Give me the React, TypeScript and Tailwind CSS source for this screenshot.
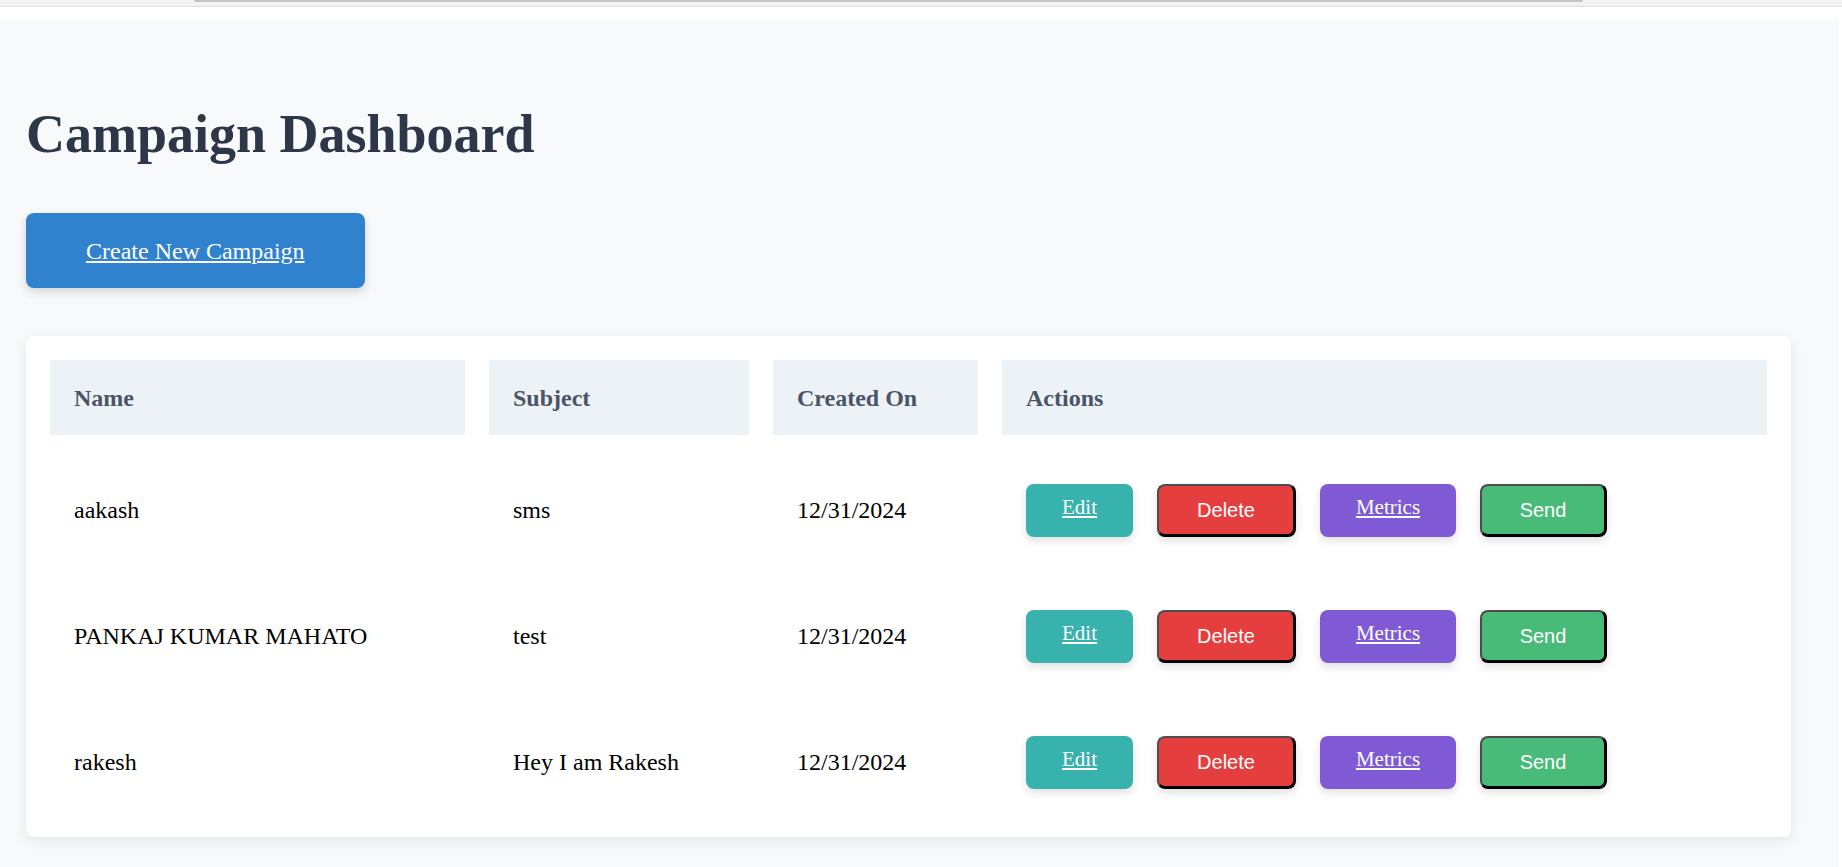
import React from "react";

type Campaign = {
  name: string;
  subject: string;
  createdOn: string;
};

const campaigns: Campaign[] = [
  { name: "aakash", subject: "sms", createdOn: "12/31/2024" },
  { name: "PANKAJ KUMAR MAHATO", subject: "test", createdOn: "12/31/2024" },
  { name: "rakesh", subject: "Hey I am Rakesh", createdOn: "12/31/2024" },
];

const headers = ["Name", "Subject", "Created On", "Actions"];

const LinkButton: React.FC<{ label: string; className: string }> = ({ label, className }) => (
  <a
    href="#"
    className={`flex h-[53px] items-center justify-center rounded-lg pb-[5px] text-[21px] text-white underline shadow-[0_4px_8px_rgba(0,0,0,0.12)] ${className}`}
  >
    {label}
  </a>
);

const PlainButton: React.FC<{ label: string; className: string }> = ({ label, className }) => (
  <button
    type="button"
    className={`flex h-[53px] items-center justify-center rounded-lg border-t-2 border-l-2 border-r-[3px] border-b-[3px] border-t-[#4d4d4d] border-l-[#4d4d4d] border-r-black border-b-black font-['Liberation_Sans',Arial,sans-serif] text-[20px] text-white shadow-[0_4px_8px_rgba(0,0,0,0.12)] ${className}`}
  >
    {label}
  </button>
);

const App: React.FC = () => {
  return (
    <div className="flex min-h-screen flex-col bg-white font-['Liberation_Serif','Times_New_Roman',serif]">
      <div className="h-[7px] border-b border-[#dedede] bg-[#f3f3f3] pl-[194px]">
        <div className="h-[2px] w-[1389px] rounded-b bg-[#c4c4c4]" />
      </div>
      <div className="h-[12px]" />
      <main className="flex w-[1839px] flex-1 flex-col items-start bg-[#f7f9fb] pl-[26px] pt-[84px] pb-[30px]">
        <h1 className="text-[54px] font-bold leading-[62px] text-[#2d3748]">Campaign Dashboard</h1>

        <a
          href="#"
          className="mt-12 flex h-[75px] items-center rounded-lg bg-[#3182ce] px-[60px] text-[24px] text-white underline shadow-[0_4px_10px_rgba(0,0,0,0.15)]"
        >
          Create New Campaign
        </a>

        <div className="mt-12 w-[1765px] rounded-lg bg-white p-6 shadow-[0_4px_14px_rgba(0,0,0,0.08)]">
          <div className="grid grid-cols-[415px_260px_205px_1fr] gap-6">
            {headers.map((h) => (
              <div
                key={h}
                className="flex h-[75px] items-center bg-[#edf2f7] px-6 text-[24px] font-bold text-[#4a5568]"
              >
                {h}
              </div>
            ))}

            {campaigns.map((c) => (
              <React.Fragment key={c.name}>
                <div className="flex h-[102px] items-center px-6 text-[24px] text-black">{c.name}</div>
                <div className="flex h-[102px] items-center px-6 text-[24px] text-black">{c.subject}</div>
                <div className="flex h-[102px] items-center px-6 text-[24px] text-black">{c.createdOn}</div>
                <div className="flex h-[102px] items-center gap-6 px-6">
                  <LinkButton label="Edit" className="w-[107px] bg-[#38b2ac]" />
                  <PlainButton label="Delete" className="w-[139px] bg-[#e53e3e]" />
                  <LinkButton label="Metrics" className="w-[136px] bg-[#805ad5]" />
                  <PlainButton label="Send" className="w-[127px] bg-[#48bb78]" />
                </div>
              </React.Fragment>
            ))}
          </div>
        </div>
      </main>
    </div>
  );
};

export default App;
